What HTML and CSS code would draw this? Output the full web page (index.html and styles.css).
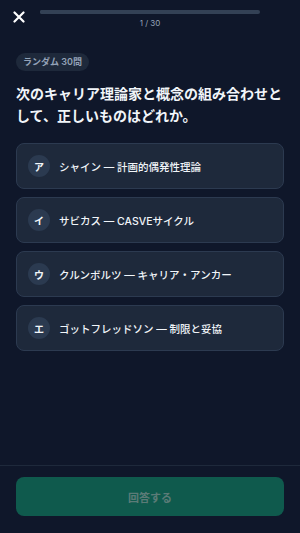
FILE: index.html
```html
<!DOCTYPE html>
<html lang="ja">
<head>
    <meta charset="UTF-8">
    <meta name="viewport" content="width=device-width, initial-scale=1.0">
    <title>クイズ</title>
    <link rel="stylesheet" href="styles.css">
</head>
<body>
    <div class="app">
        <header class="top-bar">
            <button class="close-btn" aria-label="閉じる">
                <svg width="12" height="12" viewBox="0 0 12 12">
                    <path d="M1.5 1.5 L10.5 10.5 M10.5 1.5 L1.5 10.5" stroke="#fff" stroke-width="2.2" stroke-linecap="round"/>
                </svg>
            </button>
            <div class="progress">
                <div class="progress-track">
                    <div class="progress-fill" style="width: 3.33%"></div>
                </div>
                <div class="progress-label">1 / 30</div>
            </div>
        </header>

        <main class="content">
            <span class="chip">ランダム 30問</span>
            <h1 class="question">次のキャリア理論家と概念の組み合わせとして、正しいものはどれか。</h1>

            <div class="choices">
                <div class="choice">
                    <span class="badge">ア</span>
                    <span class="choice-text">シャイン — 計画的偶発性理論</span>
                </div>
                <div class="choice">
                    <span class="badge">イ</span>
                    <span class="choice-text">サビカス — CASVEサイクル</span>
                </div>
                <div class="choice">
                    <span class="badge">ウ</span>
                    <span class="choice-text">クルンボルツ — キャリア・アンカー</span>
                </div>
                <div class="choice">
                    <span class="badge">エ</span>
                    <span class="choice-text">ゴットフレッドソン — 制限と妥協</span>
                </div>
            </div>
        </main>

        <footer class="bottom-bar">
            <button class="submit-btn" disabled>回答する</button>
        </footer>
    </div>
</body>
</html>
```

FILE: styles.css
```css
:root {
    --bg: #0f172a;
    --card: #1e293b;
    --card-border: #2c3a50;
    --muted: #94a3b8;
    --text: #f1f5f9;
}

* {
    box-sizing: border-box;
}

body {
    margin: 0;
    background: var(--bg);
    color: var(--text);
    font-family: Inter, "Noto Sans CJK JP", sans-serif;
}

.app {
    height: 533px;
    display: flex;
    flex-direction: column;
}

.top-bar {
    display: flex;
    align-items: flex-start;
    padding: 10px 16px 0 13px;
    gap: 15px;
}

.close-btn {
    background: none;
    border: none;
    padding: 0;
    width: 12px;
    height: 14px;
    display: flex;
    align-items: center;
}

.progress {
    flex: 1;
    padding-right: 24px;
    display: flex;
    flex-direction: column;
    align-items: center;
}

.progress-track {
    width: 100%;
    height: 4px;
    border-radius: 2px;
    background: #334155;
    overflow: hidden;
}

.progress-fill {
    height: 100%;
    background: #334155;
}

.progress-label {
    margin-top: 4px;
    font-size: 8px;
    color: var(--muted);
}

.content {
    flex: 1;
    padding: 25px 16px 0;
    display: flex;
    flex-direction: column;
    align-items: flex-start;
}

.chip {
    background: var(--card);
    color: var(--muted);
    font-size: 9px;
    font-weight: 600;
    padding: 3px 7px;
    border-radius: 9px;
    line-height: 12px;
}

.question {
    margin: 12px 0 16px;
    font-size: 14px;
    font-weight: 700;
    line-height: 22px;
}

.choices {
    align-self: stretch;
    display: flex;
    flex-direction: column;
    gap: 8px;
}

.choice {
    display: flex;
    align-items: center;
    height: 46px;
    padding: 0 11px;
    background: var(--card);
    border: 1px solid var(--card-border);
    border-radius: 8px;
    gap: 9px;
}

.badge {
    width: 22px;
    height: 22px;
    border-radius: 50%;
    background: #2b3a50;
    display: flex;
    align-items: center;
    justify-content: center;
    font-size: 10px;
    font-weight: 700;
}

.choice-text {
    font-size: 10.5px;
    font-weight: 500;
}

.bottom-bar {
    border-top: 1px solid #1e293b;
    padding: 11px 16px 17px;
}

.submit-btn {
    width: 100%;
    height: 39px;
    border: none;
    border-radius: 8px;
    background: #0f5a4d;
    color: #5b7b77;
    font-family: inherit;
    font-size: 11px;
    font-weight: 700;
}
```
